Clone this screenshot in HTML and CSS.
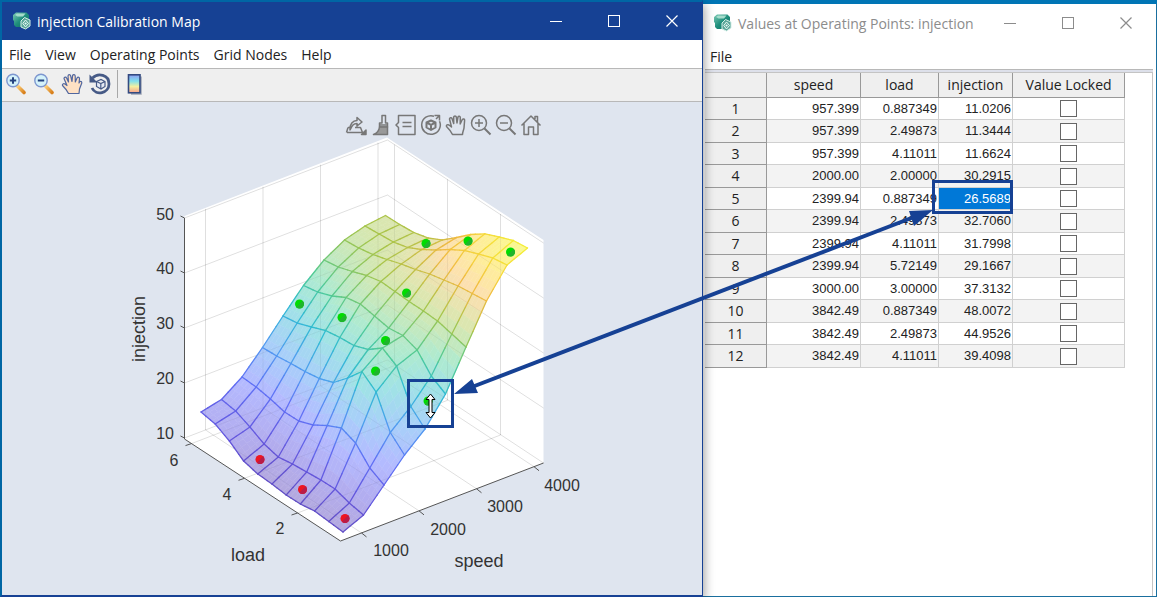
FILE: index.html
```html
<!DOCTYPE html>
<html lang="en">
<head>
<meta charset="utf-8">
<title>injection Calibration Map</title>
<link rel="stylesheet" href="styles.css">
</head>
<body>
<svg class="defs" aria-hidden="true">
  <defs>
    <linearGradient id="teal" x1="0" y1="0" x2="1" y2="1"><stop offset="0" stop-color="#7cc9b4"/><stop offset=".5" stop-color="#1f8f7c"/><stop offset="1" stop-color="#0c6b60"/></linearGradient>
    <linearGradient id="handle" x1="0" y1="0" x2="1" y2="1"><stop offset="0" stop-color="#ffd27a"/><stop offset="1" stop-color="#d8801c"/></linearGradient>
    <linearGradient id="bar" x1="0" y1="0" x2="0" y2="1"><stop offset="0" stop-color="#8f9cf0"/><stop offset=".35" stop-color="#7fe0ee"/><stop offset=".65" stop-color="#f4f0a0"/><stop offset="1" stop-color="#f7a08c"/></linearGradient>
    <symbol id="app" viewBox="0 0 20 20">
      <path d="M1 4 4 1.500H14.500L17 4V8L10 16H4L2 14V10L1 9Z" fill="url(#teal)"/>
      <path d="M3 4 5 2.500H13.500L11 5.500H5.500Z" fill="#a5dccb"/>
      <path d="M12.500 6.500 18 9V15L13.500 18 9 16V10Z" fill="#5aa598" stroke="#d5efe8" stroke-width="1"/>
      <path d="M13.500 9 16.500 12.500 13.500 16 10.800 12.500Z" fill="none" stroke="#e8faf5" stroke-width="1"/>
      <circle cx="13.600" cy="12.500" r="1.100" fill="#e8faf5"/>
    </symbol>
    <symbol id="min" viewBox="0 0 12 12"><path d="M0 6.500H12" stroke="currentColor"/></symbol>
    <symbol id="max" viewBox="0 0 12 12"><rect x=".5" y=".5" width="11" height="11" fill="none" stroke="currentColor"/></symbol>
    <symbol id="close" viewBox="0 0 12 12"><path d="M.5 .5 11.500 11.500M11.500 .5 .5 11.500" fill="none" stroke="currentColor" stroke-width="1.200"/></symbol>
  </defs>
</svg>

<main class="desktop">
  <section class="window window-main">
    <header class="titlebar">
      <svg class="app-icon"><use href="#app"/></svg>
      <h1 class="title">injection Calibration Map</h1>
      <div class="controls">
        <button class="control" aria-label="Minimize"><svg><use href="#min"/></svg></button>
        <button class="control" aria-label="Maximize"><svg><use href="#max"/></svg></button>
        <button class="control" aria-label="Close"><svg><use href="#close"/></svg></button>
      </div>
    </header>
    <nav class="menubar">
      <button>File</button><button>View</button><button>Operating Points</button><button>Grid Nodes</button><button>Help</button>
    </nav>
    <div class="toolbar">
      <button class="tool" aria-label="Zoom in"><svg viewBox="0 0 22 22">
        <path d="M12.500 13 19 19.500" stroke="url(#handle)" stroke-width="3.600" stroke-linecap="round"/>
        <circle cx="8" cy="7.500" r="6.200" fill="#d4f2fa" stroke="#7d96cf" stroke-width="1.400"/>
        <path d="M4.800 7.500H11.200M8 4.300V10.700" stroke="#24427f" stroke-width="2"/></svg></button>
      <button class="tool" aria-label="Zoom out"><svg viewBox="0 0 22 22">
        <path d="M12.500 13 19 19.500" stroke="url(#handle)" stroke-width="3.600" stroke-linecap="round"/>
        <circle cx="8" cy="7.500" r="6.200" fill="#d4f2fa" stroke="#7d96cf" stroke-width="1.400"/>
        <path d="M4.800 7.500H11.200" stroke="#24427f" stroke-width="2"/></svg></button>
      <button class="tool" aria-label="Pan"><svg viewBox="0 0 22 22">
        <path d="M7.500 20.500C6 17 3.500 14.500 1.500 12.500 1 11 2.500 10.300 4 11L6 12.500 3 5.500C3 4 5 3.600 5.600 5L7.500 9 7 3C7.200 1.200 9.300 1.200 9.700 3L11 8.500 11.600 2.500C12.200 1 14.200 1.400 14.200 3L14.300 9 16 5C17 3.600 18.700 4.300 18.500 6L18 10 19 8.500C20.300 7.800 21 9 20.700 10.300L18.500 16 18 20.500Z" fill="#ffe1c4" stroke="#51679f" stroke-width="1.200" stroke-linejoin="round"/></svg></button>
      <button class="tool" aria-label="Rotate"><svg viewBox="0 0 22 22">
        <path d="M3.500 5C9-.5 20 1.500 20 11 20 20 7 23.500 3 15" fill="none" stroke="#465a86" stroke-width="2.800"/>
        <path d="M.5 1.500V9.500H8.500Z" fill="#465a86"/>
        <path d="M7.500 8.500 12 6.500 16 8.500V13.500L12 16 7.500 13.500ZM7.500 8.500 11.800 10.500 16 8.500M11.800 10.500V15.500" fill="#e5eaf5" stroke="#465a86" stroke-width="1.200"/></svg></button>
      <span class="separator"></span>
      <button class="tool" aria-label="Colorbar"><svg viewBox="0 0 22 22">
        <path d="M17 3.500V21H7" fill="none" stroke="#a0a6b5" stroke-width="1.500"/>
        <rect x="4.500" y="1.800" width="11.500" height="18" fill="url(#bar)" stroke="#334a80" stroke-width="1.600"/></svg></button>
    </div>
    <div class="plot">
      <svg class="chart" viewBox="2 102 700 493" role="img" aria-label="injection surface over speed and load">
        <path d="M184.500 216 387 137.500 543.500 240V463L340.500 541 184.500 439Z" fill="#fff"/>
        <g id="grid-back" class="grid-back"></g>
        <g id="faces"></g>
        <g id="grid-front" class="grid-front"></g>
        <g id="edges" class="edges"></g>
        <path d="M184.500 218V439L340.500 541 543.500 463" class="axis"/>
        <path id="ticks" class="axis"/>
        <g id="points"></g>
        <g class="tick-label end">
          <text x="174" y="220">50</text><text x="174" y="274">40</text><text x="174" y="329">30</text><text x="174" y="384">20</text><text x="174" y="439">10</text>
        </g>
        <g class="tick-label">
          <text x="174" y="466">6</text><text x="227" y="500">4</text><text x="280" y="534">2</text>
          <text x="391" y="556">1000</text><text x="448" y="535">2000</text><text x="505" y="512">3000</text><text x="562" y="491">4000</text>
        </g>
        <g class="axis-label">
          <text x="248" y="561">load</text><text x="479" y="567">speed</text>
          <text transform="translate(145 329) rotate(-90)">injection</text>
        </g>
      </svg>
      <div class="axes-tools">
        <button aria-label="Export"><svg viewBox="0 0 22 22"><path d="M3 13.500H6.500M2 18.500H17.500L15.500 13.500H10M3 13.500 1.500 18.500M5 16C4.500 10 8 6.500 12 6.500V3.500L17 8 12 12V9.500C8 9.500 7 12 5 16Z"/><path d="M21 16V20.500H16.500Z" fill="#777"/></svg></button>
        <button aria-label="Brush"><svg viewBox="0 0 22 22"><path d="M12 1.500H15.500V9H17.500V13H9.500V9H12Z"/><path d="M9.500 13C9 17 6.500 19.500 3.500 20.500H17.500V13Z" fill="#999"/><path d="M9.500 11H17.500"/></svg></button>
        <button aria-label="Data tips"><svg viewBox="0 0 22 22"><path d="M3.500 1.500H20V20.500H3.500V13.500L1 11 3.500 8.500ZM7.500 8.500H16.500M7.500 12.500H16.500"/></svg></button>
        <button aria-label="Rotate 3D"><svg viewBox="0 0 22 22"><path d="M14 2.200A9.300 9.300 0 1 0 19.500 7.200M14.500 1.500H19.500V6.500M19.500 1.500 16 5"/><path d="M6.500 8.500 11 6.500 15.500 8.500V13.500L11 16 6.500 13.500ZM6.500 8.500 11 10.800 15.500 8.500M11 10.800V16" stroke-width="2"/></svg></button>
        <button aria-label="Pan"><svg viewBox="0 0 22 22"><path d="M7.500 20.500C6 17 3.500 14.500 1.500 12.500 1 11 2.500 10.300 4 11L6.500 13 4.500 5C4.500 3.500 6.500 3.200 7 4.600L8.700 9.500 8.700 3C9 1.500 11 1.500 11.300 3L12 9 13 3C13.500 1.800 15.300 2 15.300 3.600L15.200 10 17.300 5.500C18.200 4.400 19.800 5 19.600 6.500L19 14C18.500 17 17.500 18 17.500 20.500Z"/></svg></button>
        <button aria-label="Zoom in"><svg viewBox="0 0 22 22"><circle cx="9" cy="9" r="7.500"/><path d="M5 9H13M9 5V13"/><path d="M14.500 14.500 20.500 20.500" stroke-width="2"/></svg></button>
        <button aria-label="Zoom out"><svg viewBox="0 0 22 22"><circle cx="9" cy="9" r="7.500"/><path d="M5 9H13"/><path d="M14.500 14.500 20.500 20.500" stroke-width="2"/></svg></button>
        <button aria-label="Restore view"><svg viewBox="0 0 22 22"><path d="M1.500 11.500 11 2 20.500 11.500M4 9.500V20.500H8.500V13H13.500V20.500H18V9.500M15 5V2.500H17.500V8"/></svg></button>
      </div>
    </div>
  </section>

  <section class="window window-values">
    <header class="titlebar">
      <svg class="app-icon"><use href="#app"/></svg>
      <h2 class="title">Values at Operating Points: injection</h2>
      <div class="controls">
        <button class="control" aria-label="Minimize"><svg><use href="#min"/></svg></button>
        <button class="control" aria-label="Maximize"><svg><use href="#max"/></svg></button>
        <button class="control" aria-label="Close"><svg><use href="#close"/></svg></button>
      </div>
    </header>
    <nav class="menubar"><button>File</button></nav>
    <div class="table-pane">
      <table class="values">
        <colgroup><col class="c-num"><col class="c-speed"><col class="c-load"><col class="c-inj"><col class="c-lock"></colgroup>
        <thead><tr><th></th><th>speed</th><th>load</th><th>injection</th><th>Value Locked</th></tr></thead>
        <tbody>
          <tr><th>1</th><td>957.399</td><td>0.887349</td><td>11.0206</td><td><input type="checkbox" aria-label="Lock value 1"></td></tr>
          <tr><th>2</th><td>957.399</td><td>2.49873</td><td>11.3444</td><td><input type="checkbox" aria-label="Lock value 2"></td></tr>
          <tr><th>3</th><td>957.399</td><td>4.11011</td><td>11.6624</td><td><input type="checkbox" aria-label="Lock value 3"></td></tr>
          <tr><th>4</th><td>2000.00</td><td>2.00000</td><td>30.2915</td><td><input type="checkbox" aria-label="Lock value 4"></td></tr>
          <tr><th>5</th><td>2399.94</td><td>0.887349</td><td class="selected">26.5689</td><td><input type="checkbox" aria-label="Lock value 5"></td></tr>
          <tr><th>6</th><td>2399.94</td><td>2.49873</td><td>32.7060</td><td><input type="checkbox" aria-label="Lock value 6"></td></tr>
          <tr><th>7</th><td>2399.94</td><td>4.11011</td><td>31.7998</td><td><input type="checkbox" aria-label="Lock value 7"></td></tr>
          <tr><th>8</th><td>2399.94</td><td>5.72149</td><td>29.1667</td><td><input type="checkbox" aria-label="Lock value 8"></td></tr>
          <tr><th>9</th><td>3000.00</td><td>3.00000</td><td>37.3132</td><td><input type="checkbox" aria-label="Lock value 9"></td></tr>
          <tr><th>10</th><td>3842.49</td><td>0.887349</td><td>48.0072</td><td><input type="checkbox" aria-label="Lock value 10"></td></tr>
          <tr><th>11</th><td>3842.49</td><td>2.49873</td><td>44.9526</td><td><input type="checkbox" aria-label="Lock value 11"></td></tr>
          <tr><th>12</th><td>3842.49</td><td>4.11011</td><td>39.4098</td><td><input type="checkbox" aria-label="Lock value 12"></td></tr>
        </tbody>
      </table>
    </div>
  </section>

  <svg class="callout" viewBox="0 0 1157 597" aria-hidden="true">
    <g fill="none" stroke="#164194">
      <rect x="408.500" y="380.500" width="44" height="46" stroke-width="3"/>
      <rect x="933.500" y="181.500" width="78" height="31" stroke-width="3"/>
      <path d="M472 387 914 217" stroke-width="4"/>
    </g>
    <path d="M454 394 472 379 478 393ZM933 210 909 211 914 226Z" fill="#164194"/>
    <path d="M430.500 394 435 399.500H432V412.500H435L430.500 418 426 412.500H429V399.500H426Z" fill="#fff" stroke="#000" stroke-width="1"/>
  </svg>
</main>
<script src="surface.js"></script>
</body>
</html>
```

FILE: styles.css
```css
* { box-sizing: border-box; }
body { margin: 0; font-family: "Open Sans", "Noto Sans", sans-serif; font-size: 14px; color: #222; }
button { border: 0; padding: 0; background: none; font: inherit; color: inherit; }
.defs { position: absolute; width: 0; height: 0; }

.desktop {
  position: relative;
  display: grid;
  grid-template-columns: 703fr 454fr;
  min-height: 100vh;
  background: #0075b5;
}
.window { display: flex; flex-direction: column; min-width: 0; }
.window-main {
  z-index: 1;
  border: solid #164194;
  border-width: 2px 1px 2px 2px;
  border-top-color: #0066a4;
  border-left-color: #0066a4;
  background: #dfe5ef;
  box-shadow: 1px 4px 10px rgba(0, 0, 0, .4);
}
.window-values { margin-top: 4px; border-right: 1px solid #1a6f9e; border-bottom: 1px solid #1a6f9e; background: #fff; }

.titlebar { display: flex; align-items: center; height: 38px; padding-left: 10px; gap: 5px; }
.window-main .titlebar { background: #164194; color: #fff; }
.window-values .titlebar { color: #8c8c8c; }
.app-icon { width: 20px; height: 20px; }
.title { flex: 1; margin: 0; font-size: 14px; font-weight: 400; white-space: nowrap; }
.controls { display: flex; height: 100%; padding-right: 1px; }
.control { display: grid; place-items: center; width: 58px; height: 100%; }
.control svg { width: 12px; height: 12px; }

.menubar { display: flex; align-items: center; gap: 14px; height: 28px; padding: 0 7px; background: #fff; }
.window-values .menubar { border-bottom: 0; }

.toolbar { display: flex; align-items: center; gap: 6px; height: 34px; padding: 0 3px 2px; background: #efefef; border-top: 1px solid #b8b8b8; border-bottom: 1px solid #b8b8b8; }
.tool, .tool svg { display: block; width: 22px; height: 22px; }
.separator { width: 1px; height: 28px; background: #a8a8a8; }

.plot { position: relative; flex: 1; display: flex; min-height: 0; }
.chart { flex: 1; width: 100%; font-family: "Liberation Sans", Arial, sans-serif; }
.axes-tools { position: absolute; top: 12px; left: 49%; display: flex; gap: 3px; }
.axes-tools svg { display: block; width: 22px; height: 22px; fill: none; stroke: #777; stroke-width: 1.5px; stroke-linejoin: round; }
.grid-back { stroke: #000; stroke-opacity: .08; fill: none; }
.grid-front { stroke: #000; stroke-opacity: .05; fill: none; }
.edges { fill: none; stroke-width: 1.3px; stroke-linecap: round; }
.axis { fill: none; stroke: #555; stroke-width: 1px; }
.tick-label { font-size: 16px; fill: #333; text-anchor: middle; }
.tick-label.end { text-anchor: end; }
.axis-label { font-size: 18px; fill: #333; text-anchor: middle; }

.table-pane { flex: 1; margin: 2px 3px 0 2px; border: 1px solid #c4c4c4; border-width: 1px 1px 0 0; box-shadow: 0 -2px 0 #dde0ea, 0 -3px 0 #b8b8b8; }
.values { border-collapse: separate; border-spacing: 0; table-layout: fixed; width: 94%; }
.c-num { width: 62px; }
.c-speed { width: 94px; }
.c-load { width: 78px; }
.c-inj { width: 74px; }
.values th, .values td { padding: 0; line-height: 20px; border-right: 1px solid #d0d0d0; border-bottom: 1px solid #d0d0d0; }
.values th { font-weight: 400; background: #efefef; border-color: #999; }
.values thead th { height: 25px; line-height: 24px; }
.values tbody tr { height: 22px; }
.values tbody tr:nth-child(even) { height: 23px; background: #f3f3f3; }
.values td { padding-right: 1px; font-family: "Liberation Sans", Arial, sans-serif; font-size: 13px; text-align: right; }
.values td:last-child { text-align: center; }
.values .selected { background: #0078d7; color: #fff; }
.values input { display: block; appearance: none; width: 17px; height: 17px; margin: 0 auto; border: 1px solid #666; background: #fff; }

.callout { position: absolute; inset: 0; z-index: 2; width: 100%; height: 100%; pointer-events: none; }
```

FILE: surface.js
```js
// Screen height of each surface node: one row per speed step, one column per load step.
const rows = [
  [532, 521.5, 511, 504, 495, 484, 474, 461, 441, 424, 412],
  [515, 503, 489, 480, 472, 464, 457, 444, 427, 411, 399.5],
  [485, 468, 443, 428, 425.5, 425, 421, 412, 399, 387, 377],
  [455, 432.5, 392, 371.5, 378, 382.5, 378.5, 371.5, 363.5, 356, 347.5],
  [429, 406.5, 366, 348, 349.5, 345.5, 337.5, 330.5, 327, 323, 316],
  [394, 376, 350, 335.5, 328, 316, 304, 297.5, 296, 292, 285.5],
  [347, 334, 321, 311, 301.5, 291.5, 281.5, 275.5, 271.5, 267, 260],
  [301, 293.5, 286, 280, 274, 269.5, 264, 259.5, 254.5, 248, 240],
  [265, 258, 254, 250.5, 249.5, 250, 249.5, 247.5, 242, 234, 226],
  [248, 240.5, 237, 233.8, 234.5, 237.5, 240, 238, 232.5, 224.5, 215.5]
];
const faceScale = [[10, 180, 168, 218], [14, 178, 172, 238], [19, 180, 186, 255], [24, 168, 207, 249], [29, 160, 226, 230], [33, 174, 234, 208], [38, 214, 231, 176], [43, 252, 224, 176], [47, 254, 238, 152], [50, 249, 250, 144]];
const edgeScale = [[10, 98, 78, 190], [14, 100, 86, 220], [19, 96, 112, 245], [24, 80, 155, 240], [29, 48, 188, 210], [33, 80, 202, 150], [38, 165, 197, 75], [43, 240, 185, 65], [47, 245, 216, 60], [50, 244, 240, 55]];

function colour(scale, z) {
  const v = Math.max(10, Math.min(49.99, z));
  const k = scale.findIndex((s, n) => n && s[0] > v);
  const a = scale[k - 1], b = scale[k], t = (v - a[0]) / (b[0] - a[0]);
  return `rgb(${[1, 2, 3].map(n => Math.round(a[n] + t * (b[n] - a[n]))).join()})`;
}
function at(i, j) {
  const r = Math.min(8, Math.floor(i)), c = Math.min(9, Math.floor(j)), s = i - r, t = j - c;
  const y = (rows[r][c] * (1 - t) + rows[r][c + 1] * t) * (1 - s) + (rows[r + 1][c] * (1 - t) + rows[r + 1][c + 1] * t) * s;
  return { x: 343 + 20.5 * i - 14.2 * j, y, z: 10 + (537.5 - 7.88 * i - 9.4 * j - y) / 5.5 };
}

// Shaded faces
const N = 4;
let faces = '';
for (let a = 9 * N - 1; a >= 0; a--) for (let b = 10 * N - 1; b >= 0; b--) {
  const p = [at(a / N, b / N), at((a + 1) / N, b / N), at((a + 1) / N, (b + 1) / N), at(a / N, (b + 1) / N)];
  const c = colour(faceScale, p.reduce((s, q) => s + q.z, 0) / 4);
  faces += `<path d="M${p.map(q => q.x.toFixed(2) + ' ' + q.y.toFixed(2)).join('L')}Z" fill="${c}" stroke="${c}" stroke-width=".5"/>`;
}
document.getElementById('faces').innerHTML = faces;

// Mesh lines, coloured by height
let edges = '';
function edge(i, j, di, dj) {
  for (let k = 0; k < 3; k++) {
    const p = at(i + di * k / 3, j + dj * k / 3), q = at(i + di * (k + 1) / 3, j + dj * (k + 1) / 3);
    edges += `<path d="M${p.x} ${p.y}L${q.x} ${q.y}" stroke="${colour(edgeScale, (p.z + q.z) / 2)}"/>`;
  }
}
for (let i = 0; i < 10; i++) for (let j = 0; j < 11; j++) {
  if (i < 9) edge(i, j, 1, 0);
  if (j < 10) edge(i, j, 0, 1);
}
document.getElementById('edges').innerHTML = edges;

// Box grid and ticks
let grid = '', ticks = '';
[218, 273, 328, 383, 438].forEach(y => {
  grid += `M184.5 ${y}l203 -78l156 103`;
  ticks += `M184.5 ${y}l-4 -2`;
});
[21, 78.5, 136, 193.5].forEach(d => {
  const y = 541 - d * 0.384;
  grid += `M${340.5 + d} ${y}l-156 -103v-221`;
  ticks += `M${340.5 + d} ${y}l5 4`;
});
[7, 60, 113].forEach(d => {
  const y = 439 + d * 0.655;
  grid += `M${184.5 + d} ${y}l203 -78v-221`;
  ticks += `M${184.5 + d} ${y}l-6 2`;
});
for (const id of ['grid-back', 'grid-front']) document.getElementById(id).innerHTML = `<path d="${grid}"/>`;
document.getElementById('ticks').setAttribute('d', ticks);

// Operating points
const green = [[426, 243.5], [468, 241], [510.5, 252], [406.5, 293], [385.5, 340.5], [375.5, 371], [342, 317.5], [299.5, 304], [428, 401]];
const red = [[260, 459.5], [302.5, 489.5], [345, 518.5]];
const dot = (p, light, dark) => `<circle cx="${p[0]}" cy="${p[1]}" r="4.5" fill="${light}"/><path d="M${p[0] + 3.2} ${p[1] - 3.2}A4.5 4.5 0 0 1 ${p[0] - 3.2} ${p[1] + 3.2}Z" fill="${dark}"/>`;
document.getElementById('points').innerHTML = green.map(p => dot(p, '#00dc00', '#1fb42c')).join('') + red.map(p => dot(p, '#ee1520', '#b81c48')).join('');
```
